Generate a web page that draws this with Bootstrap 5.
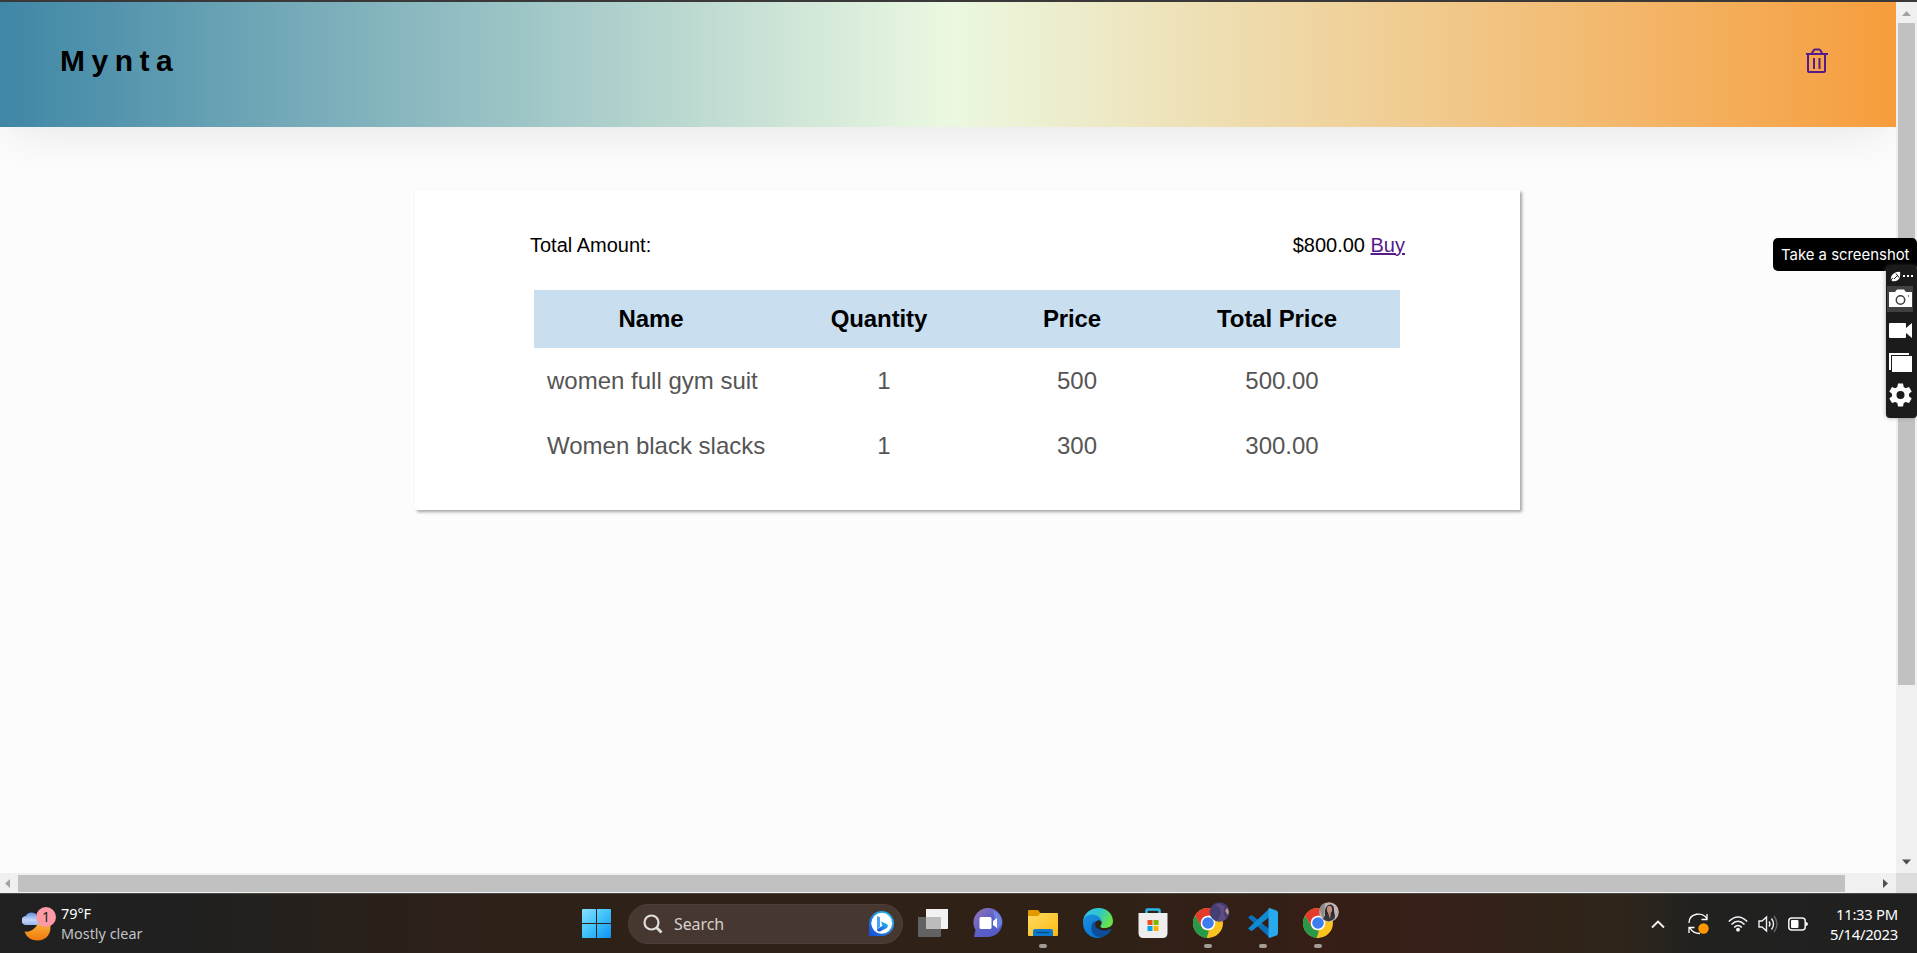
<!DOCTYPE html>
<html lang="en">
<head>
<meta charset="utf-8">
<title>Mynta</title>
<link href="https://cdn.jsdelivr.net/npm/bootstrap@5.3.0/dist/css/bootstrap.min.css" rel="stylesheet">
<style>
body{height:953px;overflow:hidden;background:#fcfcfc;color:#000;font-family:"Liberation Sans",Arial,sans-serif}
svg{display:block;flex:none}
.topline{height:2px;background:#3b3939}
.page{min-height:0}
.hero{height:125px;padding:0 67px 0 60px;background:linear-gradient(90deg,#3f87a6,#ebf8e1,#f69d3c);box-shadow:0 13px 50px -10px rgba(0,0,0,.1)}
.logo{font-size:30px;line-height:36px;letter-spacing:6.5px;margin-top:-7px}
.hero svg{margin-top:-8px}
.cart{width:1105px;height:320px;margin:63px 0 0 415px;padding:43px 115px 0;background:#fff;box-shadow:2px 2px 3px rgba(0,0,0,.35)}
.total-line{font-size:20px;line-height:24px}
.total-line a{color:#551a8b}
.items{width:866px;margin:33px 0 0 4px;font-size:24px;line-height:28px;table-layout:fixed;border-collapse:collapse}
.items th{height:58px;background:#c9deef;text-align:center;padding:0;letter-spacing:-.1px}
.items td{height:65px;text-align:center;padding:0 0 0 10px;color:#555}
.items td:first-child{text-align:left;padding-left:13px}
.vbar{width:21px;background:#f0f0f0}
.vthumb{width:17px;height:662px;background:#c1c1c1}
.hbar{height:20px;background:#f0f0f0}
.hthumb{width:1827px;height:17px;background:#c1c1c1;margin-left:7px}
.corner{width:21px;background:#dcdcdc}
.tip{position:absolute;left:1773px;top:238px;width:144px;height:33px;border-radius:5px;background:#000;color:#fff;font:14.9px/35px Inter,sans-serif;padding-left:8px;white-space:nowrap}
.tools{position:absolute;left:1886px;top:266px;width:31px;height:152px;border-radius:4px;background:#1b1b1b;box-shadow:0 0 4px rgba(120,120,120,.6)}
.taskbar{height:60px;border-top:1px solid #4b4a47;color:#fff;font-family:"Noto Sans","Open Sans",sans-serif;font-size:14.4px;line-height:20px;background:linear-gradient(90deg,#202120 0,#202020 180px,#2c2119 420px,#2f2117 700px,#302117 1130px,#361e16 1350px,#38201a 1420px,#302419 1560px,#2f261b 1620px,#212120 1700px,#202020)}
.weather{width:582px;padding-left:22px}
.weather div{margin:0 0 0 5px}
.dim{color:#c4c4c4}
.pill{width:275px;height:40px;margin-left:17px;padding:0 8px 0 14px;border-radius:20px;background:#463830;border:1px solid #4d4038;color:#d5d0cc;font-size:16px}
.pill span{letter-spacing:-.1px;margin-left:11px}
.app{width:55px;height:59px;padding-top:14px}
.app i{width:8px;height:4px;border-radius:2px;background:#a39b95;margin-top:6px}
.tray{margin-left:306px}
.clock{font-size:14.8px;letter-spacing:-.25px;margin-right:19px}
</style>
</head>
<body class="d-flex flex-column">
<div class="topline flex-shrink-0"></div>
<div class="page d-flex flex-grow-1">
  <main class="flex-grow-1">
    <header class="hero d-flex align-items-center justify-content-between">
      <div class="logo fw-bold">Mynta</div>
      <svg width="24" height="26" viewBox="0 0 24 26" fill="none" stroke="#551a8b" stroke-width="2"><path d="M1 6h22M3 6v17q0 1 1 1h15q1 0 1-1V6M6.500 6l2-3.500q.5-1 1.500-1h4q1 0 1.500 1l2 3.500M9 10v11M14.500 10v11"/></svg>
    </header>
    <section class="cart">
      <div class="total-line d-flex justify-content-between"><span>Total Amount:</span><span>$800.00 <a href="#">Buy</a></span></div>
      <table class="items">
        <colgroup><col style="width:234px"><col style="width:222px"><col style="width:164px"><col style="width:246px"></colgroup>
        <thead><tr><th>Name</th><th>Quantity</th><th>Price</th><th>Total Price</th></tr></thead>
        <tbody>
          <tr><td>women full gym suit</td><td>1</td><td>500</td><td>500.00</td></tr>
          <tr><td>Women black slacks</td><td>1</td><td>300</td><td>300.00</td></tr>
        </tbody>
      </table>
    </section>
  </main>
  <div class="vbar d-flex flex-column align-items-center justify-content-between">
    <div class="d-flex flex-column align-items-center">
      <svg width="21" height="21"><path d="M6 14l4.500-5L15 14z" fill="#a3a3a3"/></svg>
      <div class="vthumb"></div>
    </div>
    <svg width="21" height="21"><path d="M6 7.500l4.500 5 4.500-5z" fill="#505050"/></svg>
  </div>
</div>
<div class="hbar d-flex flex-shrink-0">
  <svg width="11" height="20"><path d="M10 6v9L5 10.500z" fill="#a3a3a3"/></svg>
  <div class="hthumb align-self-center"></div>
  <svg class="ms-auto" width="21" height="20"><path d="M8 6v9l5-4.500z" fill="#505050"/></svg>
  <div class="corner"></div>
</div>

<footer class="taskbar d-flex align-items-center flex-shrink-0">
  <div class="weather d-flex align-items-center">
    <svg width="34" height="36" viewBox="0 0 34 36">
      <defs><linearGradient id="moon" x2="0" y2="1"><stop stop-color="#fdc349"/><stop offset="1" stop-color="#f2790e"/></linearGradient><linearGradient id="cloud" x2="0" y2="1"><stop stop-color="#5f8fdf"/><stop offset=".6" stop-color="#c3d6f8"/><stop offset="1" stop-color="#9ab8ee"/></linearGradient></defs>
      <path d="M2.500 25.500c7 1 14-4 14-13.500 7-1 12 3 12 9 0 9-6 13.500-13 13.500-6 0-11-3-13-9z" fill="url(#moon)"/>
      <path d="M4 19a4.500 4.500 0 010-9c1-4 9-5 11 0 5 0 5 9 0 9z" fill="url(#cloud)"/>
      <circle cx="24" cy="11" r="10" fill="#fe9aa5"/><text x="24" y="16" text-anchor="middle" font-size="14" fill="#222">1</text>
    </svg>
    <div><span class="d-block">79°F</span><span class="dim d-block">Mostly clear</span></div>
  </div>
  <svg width="29" height="29" viewBox="0 0 29 29"><defs><linearGradient id="win" gradientUnits="userSpaceOnUse" x2="29" y2="29"><stop stop-color="#88e0ff"/><stop offset=".5" stop-color="#3fc1fb"/><stop offset="1" stop-color="#0b93f8"/></linearGradient></defs><path d="M0 1q0-1 1-1h13v14H0zM15 0h13q1 0 1 1v13H15zM0 15h14v14H1q-1 0-1-1zM15 15h14v13q0 1-1 1H15z" fill="url(#win)"/></svg>
  <div class="pill d-flex align-items-center">
    <svg width="20" height="20" fill="none" stroke="#dfdddc" stroke-width="2.200"><circle cx="8.500" cy="8.500" r="7"/><path d="M13.500 13.500l5 5" stroke-width="2.800"/></svg>
    <span>Search</span>
    <svg class="ms-auto" width="25" height="26" viewBox="0 0 25 26"><defs><linearGradient id="bing" x1="1" y2="1" x2="0"><stop stop-color="#27c9f0"/><stop offset="1" stop-color="#1747da"/></linearGradient></defs><path d="M0 25V12.500A12.500 12.500 0 1112.500 25z" fill="url(#bing)"/><circle cx="12.700" cy="12.300" r="10.500" fill="#fff"/><path d="M8 5l3 1.200v9.500l-3 2.500z" fill="#49a2f5"/><path d="M8 18.200l4-2.500 1.500-1.200-1.600-4 6 2.600q2 1.300 0 4L11 20.500q-3 0-3-2.300z" fill="url(#bing)"/></svg>
  </div>
  <div class="d-flex ps-1" style="margin-left:-2px">
    <div class="app d-flex flex-column align-items-center"><svg width="30" height="30"><path d="M0 9h23v19q0 1-1 1H1q-1 0-1-1z" fill="#626262"/><path d="M8 1h22v19q0 1-1 1H8z" fill="#f2f2f2"/><path d="M8 9h15v12H8z" fill="#bcbcbc"/></svg></div>
    <div class="app d-flex flex-column align-items-center"><svg width="30" height="30"><defs><linearGradient id="chat" x2="1" y2="1"><stop stop-color="#9c77b5"/><stop offset=".5" stop-color="#5b5fc7"/><stop offset="1" stop-color="#5558c5"/></linearGradient></defs><path d="M1 29l1.500-7A14.500 14.500 0 1115 29z" fill="url(#chat)"/><path d="M20 2q10 5 9 14l-5 6z" fill="#7da0f0" opacity=".55"/><rect x="6.500" y="9" width="12" height="12" rx="1.500" fill="#fff"/><path d="M20 13l4-3v10l-4-3z" fill="#fff"/></svg></div>
    <div class="app d-flex flex-column align-items-center"><svg width="30" height="30"><defs><linearGradient id="fold" x2="1" y2="1"><stop stop-color="#ffdb66"/><stop offset="1" stop-color="#fbb90e"/></linearGradient></defs><path d="M0 8V3q0-1 1-1h9l3 3.500h16v5H0z" fill="#e09a00"/><path d="M0 8h10l3-3h16q1 0 1 1v21q0 1-1 1H1q-1 0-1-1z" fill="url(#fold)"/><path d="M5 28v-5q0-2 2-2h16q2 0 2 2v5z" fill="#0e78ca"/><path d="M8.500 24.500h13" stroke="#064a86" stroke-width="1.200"/></svg><i></i></div>
    <div class="app d-flex flex-column align-items-center"><svg width="30" height="30" viewBox="0 0 30 30"><defs><linearGradient id="e1" x2="1" y2=".4"><stop stop-color="#35bdf2"/><stop offset=".55" stop-color="#2fc8c9"/><stop offset="1" stop-color="#65e34a"/></linearGradient><linearGradient id="e2" x2=".4" y2="1"><stop stop-color="#1c91df"/><stop offset="1" stop-color="#0877d4"/></linearGradient></defs><path d="M0 14C1-4 29-5 30 13c0 6-5 7-9 7-4 0-4-2-3-3 2-2 0-7-5-7C6 10 1 10 0 14z" fill="url(#e1)"/><path d="M0 15C0 10 4 6.500 9 6.500c6 0 10 4 9.500 8C17 10 11 13 11 18c0 7 8 10 10 10-2 1-4 2-6 2C6 30 0 23 0 15z" fill="url(#e2)"/><path d="M10.500 14C5 20 10 31 19 29c4-1 8-4 9.500-7.500q0-1-1-.5C19 25 12 20 12 17q0-2 1.500-4z" fill="#0c4f98"/></svg></div>
    <div class="app d-flex flex-column align-items-center"><svg width="30" height="30"><path d="M8.500 6V2.500q0-1 1-1h11q1 0 1 1V6" fill="none" stroke="#29b7ec" stroke-width="2.600"/><path d="M.5 5h29v20q0 5-5 5h-19q-5 0-5-5z" fill="#eeeeef"/><path d="M9.500 12h5v5h-5z" fill="#f04e20"/><path d="M15.500 12h5v5h-5z" fill="#7db700"/><path d="M9.500 18h5v5h-5z" fill="#02a2ea"/><path d="M15.500 18h5v5h-5z" fill="#fcb400"/></svg></div>
    <div class="app d-flex flex-column align-items-center"><svg width="30" height="30" viewBox="0 0 30 30" overflow="visible"><g id="chrome"><circle cx="15" cy="15" r="15" fill="#fcc31e"/><path d="M2 7.500A15 15 0 0128 7.500H15L8.500 19z" fill="#e33b2e"/><path d="M2 7.500l6.500 11.300q3 4 7.500 3.700L13.700 30A15 15 0 012 7.500z" fill="#28984a"/><path d="M16 30h-2l7.500-11.500z" fill="#fcc31e"/><circle cx="15" cy="15" r="7.300" fill="#fff"/><circle cx="15" cy="15" r="5.800" fill="#3d7df0"/></g><circle cx="26.500" cy="4" r="9.800" fill="#453f74"/><path d="M22-3q6 2 6 9l-4 7q5 1 9-2-4-8-1-12-5-5-10-2z" fill="#5e4c82"/><path d="M34 0q3 3 1 7l-3-4z" fill="#b99a96"/></svg><i></i></div>
    <div class="app d-flex flex-column align-items-center"><svg width="30" height="30" viewBox="0 0 30 30"><path d="M0 9.500L2.500 7.500q1-.5 2 0L25 24l-3 6z" fill="#0b70b8"/><path d="M0 20.500l2.500 2q1 .5 2 0L25 6l-3-6z" fill="#108bd2"/><path d="M21.500 0l7 2.500Q30 3 30 5v20q0 2-1.500 2.500l-7 2.500q-1 0-1-1V1q0-1 1-1z" fill="#29a9ee"/></svg><i></i></div>
    <div class="app d-flex flex-column align-items-center"><svg width="30" height="30" viewBox="0 0 30 30" overflow="visible"><use href="#chrome"/><circle cx="26" cy="4" r="9.800" fill="#bdb3b5"/><path d="M17 0q1-4 5-5l-1 15q-4-3-4-10z" fill="#8b8b88"/><path d="M22 5c-1-10 10-12 9-2l1 6H22z" fill="#302629"/><ellipse cx="26.500" cy="1.500" rx="2.600" ry="3.700" fill="#bd8f7c"/><path d="M20 11q2-5 6-5 4 0 6 4-5 6-12 1z" fill="#34383d"/><path d="M25 5h3l-1 6z" fill="#b98974"/></svg><i></i></div>
  </div>
  <div class="tray d-flex align-items-center">
    <svg width="14" height="20" fill="none" stroke="#f2f2f2" stroke-width="1.900"><path d="M1 13.500l6-6 6 6"/></svg>
    <svg style="margin-left:23px" width="22" height="22" fill="none" stroke="#fff" stroke-width="1.300"><path d="M1 10C1 0 15-2 19 6M19 1v5.500h-5.500M12 20.500q-7 0-10-5.500M1 20v-5.500h5.500"/><circle cx="15.500" cy="15.500" r="5.200" fill="#ff9800" stroke="none"/></svg>
    <svg style="margin-left:18px" width="20" height="20" fill="none" stroke="#f4f4f4" stroke-width="1.600"><path d="M.8 7.500q9.200-9 18.400 0M3.500 10.500q6.500-6.500 13 0M6.200 13.500q3.800-4 7.600 0"/><circle cx="10" cy="15.700" r="1.900" fill="#fff" stroke="none"/></svg>
    <svg style="margin-left:10px" width="20" height="20" fill="none" stroke="#f0f0f0" stroke-width="1.400"><path d="M1 7h3l4.500-4v14L4 13H1zM11 7.500q2 2.500 0 5M13.500 4.500q4 5.500 0 11"/><path d="M16 2q6 8 0 16" stroke="#666"/></svg>
    <svg style="margin-left:10px" width="20" height="20"><rect x=".8" y="4" width="16.400" height="12" rx="3" fill="none" stroke="#f4f4f4" stroke-width="1.500"/><rect x="3" y="6" width="7.500" height="8" rx="1" fill="#fff"/><path d="M17.500 8q2.500 0 2.500 2t-2.500 2z" fill="#fff"/></svg>
  </div>
  <div class="clock text-end ms-auto">11:33 PM<br>5/14/2023</div>
</footer>

<div class="tip">Take a screenshot</div>
<div class="tools">
  <svg width="31" height="152" viewBox="0 0 31 152">
    <rect x="1" y="20" width="26" height="26" fill="#404041"/>
    <g fill="#fff">
      <path d="M17 9h2v2h-2zM21 9h2v2h-2zM25 9h2v2h-2z"/>
      <path d="M5 15q-1-4 2-7 4-3 7-2 1 5-2 8-3 2-6 1z"/>
      <path d="M7 12q-2 0-2 4M8 13l4-4M10 7.500l3 4" stroke="#1b1b1b" stroke-width="1" fill="none"/>
      <path d="M3 26h6l2-2.500h7l2 2.500h6v15H3z"/>
      <path d="M3 58q0-1 1-1h15q1 0 1 1v4l6-5v15l-6-5v4q0 1-1 1H4q-1 0-1-1z"/>
      <path d="M3 87h20v2H5v15H3z"/><path d="M6 90h20v16H6z"/>
      <path d="M12 108.500h5l.7 3.500 2 1.200 3.300-1.200 2.700 4.500-2.700 2.300v2.500l2.700 2.300-2.700 4.500-3.300-1.200-2 1.200-.7 3.500h-5l-.7-3.500-2-1.200-3.300 1.200-2.700-4.500 2.700-2.300v-2.500l-2.700-2.300 2.700-4.500 3.300 1.200 2-1.200z" transform="translate(0 9)"/>
    </g>
    <circle cx="14.500" cy="34" r="4.200" fill="none" stroke="#404041" stroke-width="1.500"/><circle cx="22.500" cy="30" r=".7" fill="#404041"/>
    <circle cx="14.500" cy="129" r="4" fill="#1b1b1b"/>
  </svg>
</div>
<script src="https://cdn.jsdelivr.net/npm/bootstrap@5.3.0/dist/js/bootstrap.bundle.min.js"></script>
</body>
</html>
